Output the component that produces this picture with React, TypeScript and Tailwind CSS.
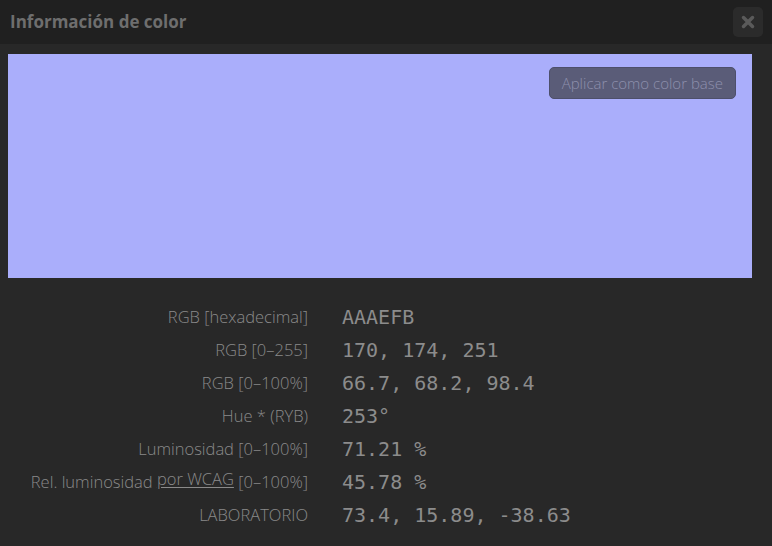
const rows: [React.ReactNode, string][] = [
  ['RGB [hexadecimal]', 'AAAEFB'],
  ['RGB [0–255]', '170, 174, 251'],
  ['RGB [0–100%]', '66.7, 68.2, 98.4'],
  ['Hue * (RYB)', '253°'],
  ['Luminosidad [0–100%]', '71.21 %'],
  [
    <>
      Rel. luminosidad{' '}
      <span className="relative -top-[3px] underline underline-offset-2">por WCAG</span>{' '}
      [0–100%]
    </>,
    '45.78 %',
  ],
  ['LABORATORIO', '73.4, 15.89, -38.63'],
];

export default function App() {
  return (
    <div className="flex h-[546px] w-[772px] flex-col bg-[#282828] font-['Open_Sans',sans-serif]">
      <div className="flex h-[44px] items-center justify-between bg-[#202020] pl-[10px] pr-[9px]">
        <h1 className="text-[17px] font-bold text-[#6e6e6e]">Información de color</h1>
        <button className="flex h-[30px] w-[30px] items-center justify-center rounded-[5px] bg-[#2b2b2b]">
          <svg width="14" height="14" viewBox="0 0 14 14">
            <path d="M2.5 2.5 L11.5 11.5 M11.5 2.5 L2.5 11.5" stroke="#5a5a5a" strokeWidth="3.5" strokeLinecap="round" />
          </svg>
        </button>
      </div>
      <div className="px-[8px] pt-[10px] pr-[20px]">
        <div className="flex h-[224px] items-start justify-end bg-[#aaaefb] pr-[16px] pt-[13px]">
          <button className="h-[32px] rounded-[5px] border border-[#4d4f6b] bg-[#5a5c78] px-[12px] text-[15px] font-light text-[#8e90ad]">
            Aplicar como color base
          </button>
        </div>
      </div>
      <div className="mt-[22px] grid grid-cols-[308px_1fr] gap-x-[34px]">
        {rows.map(([label, value], i) => (
          <div key={i} className="contents">
            <div className="flex h-[33px] items-center justify-end whitespace-nowrap pt-[2px] text-[16.5px] font-light text-[#8a8a8a]">
              <span>{label}</span>
            </div>
            <div className="flex h-[33px] items-center font-['DejaVu_Sans_Mono',monospace] text-[20px] text-[#8c8c8c]">
              {value}
            </div>
          </div>
        ))}
      </div>
    </div>
  );
}
